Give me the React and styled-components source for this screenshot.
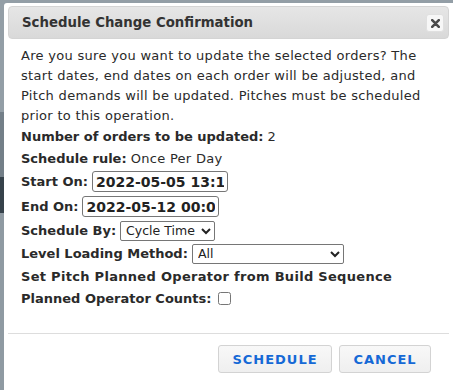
import styled, { createGlobalStyle } from "styled-components";

const GlobalStyle = createGlobalStyle`
  html, body {
    margin: 0;
    padding: 0;
    overflow: hidden;
  }
  body {
    background: linear-gradient(
      to bottom,
      #939ea6 0px,
      #939ea6 112px,
      #737f88 112px,
      #737f88 177px,
      #36424b 177px,
      #36424b 213px,
      #8f9aa2 213px
    );
    font-family: "DejaVu Sans", Verdana, sans-serif;
  }
`;

const Page = styled.div`
  height: 390px;
  padding: 3px 0 0 4px;
  box-sizing: border-box;
`;

const Dialog = styled.div`
  width: 449px;
  height: 387px;
  box-sizing: border-box;
  background: #fff;
  padding: 3px 4px 0 4px;
  border-radius: 3px 0 0 0;
  display: flex;
  flex-direction: column;
`;

const TitleBar = styled.div`
  height: 33px;
  box-sizing: border-box;
  border: 1px solid #d4d4d4;
  border-radius: 4px;
  background: linear-gradient(to bottom, #e6e6e6, #d9d9d9);
  display: flex;
  align-items: center;
  justify-content: space-between;
  padding: 0 4px 0 13px;
`;

const Title = styled.span`
  font-size: 13.3px;
  font-weight: bold;
  color: #333;
`;

const CloseButton = styled.button`
  width: 18px;
  height: 18px;
  padding: 0;
  border: 1px solid #e0e0e0;
  border-radius: 3px;
  background: #f7f7f7;
  display: flex;
  align-items: center;
  justify-content: center;
  margin-top: 1px;
`;

const Content = styled.div`
  padding: 7px 13px 0 13px;
  color: #2a2a2a;
  font-size: 13px;
  letter-spacing: 0.3px;
  flex: 1;
`;

const Intro = styled.p`
  margin: 0;
  line-height: 20px;
`;

const Fields = styled.div`
  display: flex;
  flex-direction: column;
  gap: 2px;
`;

const Row = styled.div`
  height: ${(p) => p.$h || 20}px;
  display: flex;
  align-items: center;
  gap: 4px;
  white-space: nowrap;
`;

const Label = styled.span`
  font-weight: bold;
  letter-spacing: ${(p) => (p.$wide ? "0.3px" : "0")};
`;

const DateInput = styled.input`
  width: ${(p) => p.$w}px;
  height: 21px;
  box-sizing: border-box;
  border: 1px solid #767676;
  border-radius: 3px;
  padding: 0 3px;
  font-family: "DejaVu Sans", Verdana, sans-serif;
  font-size: 14px;
  font-weight: bold;
  color: #222;
  background: #fff;
`;

const Select = styled.select`
  width: ${(p) => p.$w}px;
  height: 20px;
  box-sizing: border-box;
  border: 1px solid #767676;
  border-radius: 2px;
  padding: 0 1px;
  font-family: "DejaVu Sans", Verdana, sans-serif;
  font-size: 12.5px;
  color: #222;
  background: #fff;
`;

const Check = styled.input`
  width: 13px;
  height: 13px;
  margin: 0 0 0 2px;
`;

const ButtonPane = styled.div`
  border-top: 1px solid #dddddd;
  height: 57px;
  display: flex;
  justify-content: flex-end;
  align-items: flex-start;
  gap: 7px;
  padding: 11px 18px 0 0;
  box-sizing: border-box;
`;

const Button = styled.button`
  width: ${(p) => p.$w}px;
  height: 28px;
  border: 1px solid #d3d3d3;
  border-radius: 3px;
  background: linear-gradient(to bottom, #f8f8f8, #efefef);
  color: #1569d6;
  font-family: "DejaVu Sans", Verdana, sans-serif;
  font-size: 13px;
  font-weight: bold;
  letter-spacing: 1px;
  padding: 0;
`;

const CloseIcon = () => (
  <svg width="9" height="9" viewBox="0 0 9 9">
    <path
      d="M1.2 1.2 L7.8 7.8 M7.8 1.2 L1.2 7.8"
      stroke="#4a4a4a"
      strokeWidth="2.6"
      strokeLinecap="round"
    />
  </svg>
);

export default function App() {
  return (
    <>
      <GlobalStyle />
      <Page>
        <Dialog>
          <TitleBar>
            <Title>Schedule Change Confirmation</Title>
            <CloseButton aria-label="close">
              <CloseIcon />
            </CloseButton>
          </TitleBar>
          <Content>
            <Intro>
              Are you sure you want to update the selected orders? The start
              dates, end dates on each order will be adjusted, and Pitch
              demands will be updated. Pitches must be scheduled prior to this
              operation.
            </Intro>
            <Fields>
              <Row>
                <Label>Number of orders to be updated:</Label> 2
              </Row>
              <Row>
                <Label>Schedule rule:</Label> Once Per Day
              </Row>
              <Row $h={23}>
                <Label>Start On:</Label>
                <DateInput $w={136} defaultValue="2022-05-05 13:15:00" />
              </Row>
              <Row $h={23}>
                <Label>End On:</Label>
                <DateInput $w={137} defaultValue="2022-05-12 00:00:00" />
              </Row>
              <Row $h={21}>
                <Label>Schedule By:</Label>
                <Select $w={95} defaultValue="cycle">
                  <option value="cycle">Cycle Time</option>
                </Select>
              </Row>
              <Row $h={21}>
                <Label>Level Loading Method:</Label>
                <Select $w={152} defaultValue="all">
                  <option value="all">All</option>
                </Select>
              </Row>
              <Row>
                <Label $wide>Set Pitch Planned Operator from Build Sequence</Label>
              </Row>
              <Row>
                <Label>Planned Operator Counts:</Label>
                <Check type="checkbox" />
              </Row>
            </Fields>
          </Content>
          <ButtonPane>
            <Button $w={114}>SCHEDULE</Button>
            <Button $w={92}>CANCEL</Button>
          </ButtonPane>
        </Dialog>
      </Page>
    </>
  );
}
